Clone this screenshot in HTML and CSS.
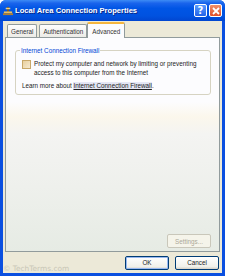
FILE: index.html
```html
<!DOCTYPE html>
<html>
<head>
<meta charset="utf-8">
<link rel="stylesheet" href="styles.css">
</head>
<body>
<div class="window">
  <div class="titlebar">
    <svg class="ticon" width="10" height="10" viewBox="0 0 11 11">
      <rect x="4.5" y="1" width="2" height="6" fill="#7a5a20"/>
      <rect x="1" y="6" width="9" height="2" fill="#e8c060"/>
      <rect x="0" y="8" width="11" height="2" fill="#b08030"/>
      <rect x="3" y="2" width="5" height="1.5" fill="#f0d080"/>
    </svg>
    <span class="ttext">Local Area Connection Properties</span>
    <span class="tbtn help">?</span>
    <span class="tbtn close">
      <svg width="8" height="8" viewBox="0 0 8 8"><path d="M1 1L7 7M7 1L1 7" stroke="#fff" stroke-width="1.8"/></svg>
    </span>
  </div>
  <div class="client">
    <div class="tabs">
      <div class="tab">General</div>
      <div class="tab">Authentication</div>
      <div class="tab active">Advanced</div>
    </div>
    <div class="panel">
      <fieldset class="group">
        <legend>Internet Connection Firewall</legend>
        <div class="check-row">
          <span class="checkbox"></span>
          <span class="check-label">Protect my computer and network by limiting or preventing access to this computer from the Internet</span>
        </div>
        <div class="learn">Learn more about <span class="link">Internet Connection Firewall</span>.</div>
      </fieldset>
      <div class="spacer"></div>
      <div class="settings-row"><span class="btn disabled">Settings...</span></div>
    </div>
    <div class="footer">
      <span class="watermark">© TechTerms.com</span>
      <span class="btn default">OK</span>
      <span class="btn">Cancel</span>
    </div>
  </div>
</div>
</body>
</html>
```
FILE: styles.css
```css
html, body { margin: 0; padding: 0; }
body { width: 225px; height: 276px; overflow: hidden; font-family: "Liberation Sans", Arial, sans-serif; font-size: 6.3px; color: #000; }
.window {
  width: 225px; height: 276px; box-sizing: border-box;
  display: flex; flex-direction: column;
  background: #0a4fe0;
  border-radius: 6px 6px 0 0;
  overflow: hidden;
}
.titlebar {
  height: 21px; flex: none;
  display: flex; align-items: center;
  padding: 0 3px 0 3px;
  background: linear-gradient(#3d8cf5 0%, #1a64ec 15%, #0055e5 40%, #0052e0 75%, #0146d0 100%);
}
.ticon { flex: none; margin-right: 2px; }
.ttext { color: #fff; font-family: "Liberation Sans", Arial, sans-serif; font-weight: bold; font-size: 7.6px; flex: 1; text-shadow: 1px 1px 0 #0a2a8a; }
.tbtn {
  width: 13px; height: 13px; box-sizing: border-box; border: 1px solid #fff; border-radius: 2px;
  display: flex; align-items: center; justify-content: center; margin-left: 2px;
  color: #fff; font-weight: bold; font-size: 10px; font-family: "DejaVu Sans", sans-serif;
}
.help { background: linear-gradient(#5a9cff, #2262e8); }
.close { background: linear-gradient(#f0906a, #e0502a); }
.client {
  flex: 1; margin: 0 3px 3px 3px; background: #ece9d8;
  display: flex; flex-direction: column; padding: 1px 2px 0 2px;
}
.tabs { display: flex; align-items: flex-end; padding-left: 2px; height: 15px; position: relative; z-index: 1; }
.tab {
  height: 13px; box-sizing: border-box; padding: 0 3px; margin-right: 2px;
  border: 1px solid #919b9c; border-bottom: none; border-radius: 2px 2px 0 0;
  background: linear-gradient(#fefefe, #ecebe6);
  display: flex; align-items: center; color: #333;
}
.tab.active {
  height: 16px; margin-bottom: -1px; background: #fcfcfe; padding: 0 4px;
  border-top: 2px solid #f5b63e; margin-left: -2px; margin-right: 0;
}
.panel {
  height: 215px; box-sizing: border-box;
  border: 1px solid #919b9c;
  background: linear-gradient(#fcfcfe 0%, #fcfcfe 30%, #fbf7ec 37%, #f4f4f2 45%, #eef0ec 70%, #e6ebe4 100%);
  padding: 9px 8px 4px 9px;
  display: flex; flex-direction: column;
}
.group {
  margin: 0; border: 1px solid #d6d3c2; border-radius: 3px; padding: 3px 6px 5px 6px;
  height: 48px; box-sizing: border-box;
}
.group legend { color: #0046d5; padding: 0 1px; margin-left: -2px; }
.check-row { display: flex; align-items: flex-start; margin-top: 3px; }
.checkbox {
  width: 7px; height: 7px; flex: none; border: 1px solid #c8a86a; margin-right: 3px; margin-top: 0px;
  background: linear-gradient(135deg, #e8d0a0, #f6ead0);
}
.check-label { line-height: 8.5px; color: #222; }
.learn { margin-top: 5px; color: #222; }
.link { text-decoration: underline; color: #222; background: #e4e6f4; }
.spacer { flex: 1; }
.settings-row { display: flex; justify-content: flex-end; margin-bottom: -1px; }
.btn {
  width: 44px; height: 14px; box-sizing: border-box; border: 1px solid #003c74; border-radius: 2px;
  background: linear-gradient(#ffffff, #f0f0ea 80%, #d6d0c5);
  display: flex; align-items: center; justify-content: center; color: #222;
}
.btn.disabled { border-color: #c9c7ba; color: #aca899; background: #f5f4ea; }
.btn.default { box-shadow: inset 0 0 0 1px #98b8f0; }
.footer { display: flex; align-items: center; height: 21px; padding-right: 1px; }
.watermark { flex: 1; color: #c9c7b7; font-family: "DejaVu Sans", sans-serif; font-size: 7.4px; line-height: 8px; align-self: flex-end; margin-bottom: 0; margin-left: -2px; }
.footer .btn { margin-left: 6px; }
```
